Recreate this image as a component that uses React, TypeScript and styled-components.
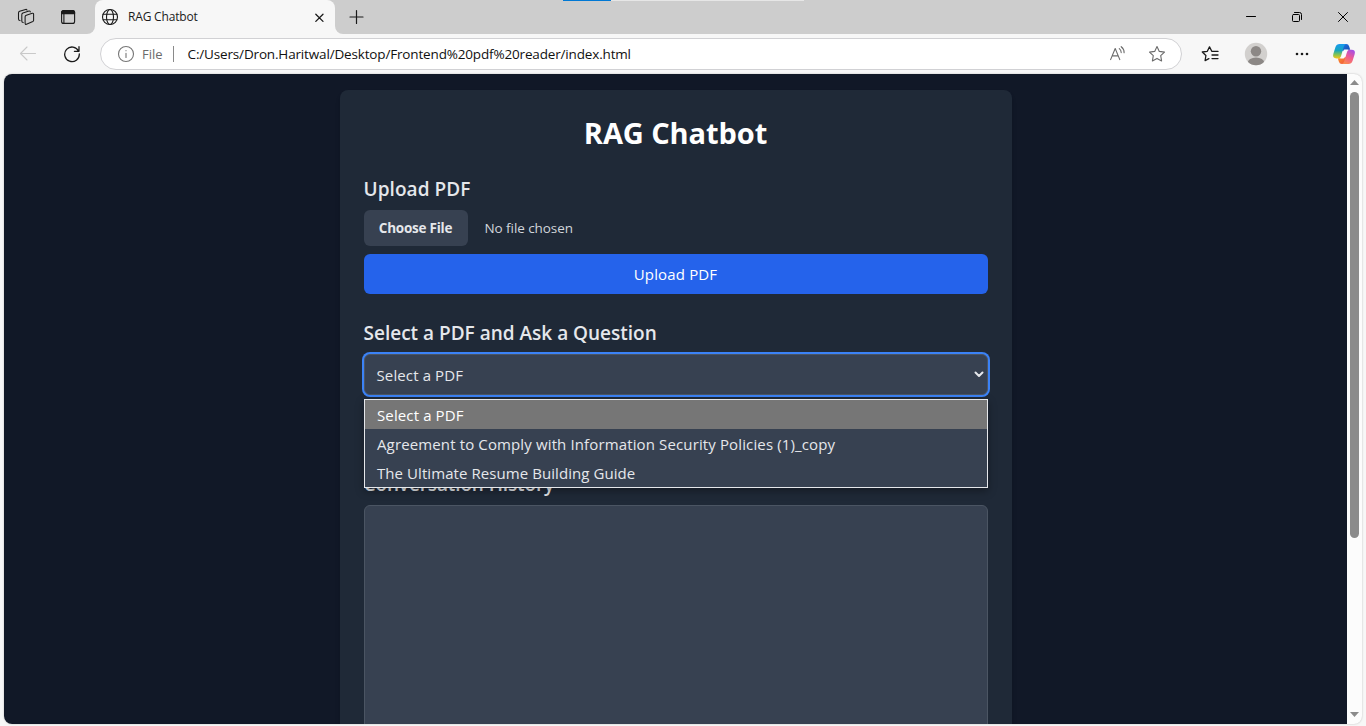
import React, { useState } from "react";
import styled, { createGlobalStyle } from "styled-components";

const GlobalStyle = createGlobalStyle`
  *, *::before, *::after { box-sizing: border-box; }
  body { margin: 0; overflow: hidden; font-family: "Segoe UI", "Open Sans", "Noto Sans", sans-serif; }
  button { font-family: inherit; border: 0; padding: 0; background: none; }
  h1, h2, ul { margin: 0; padding: 0; }
`;

const Window = styled.div`
  display: flex;
  flex-direction: column;
  width: 1366px;
  height: 726px;
  overflow: hidden;
  background: #f7f7f7;
`;

const TabStrip = styled.div`
  position: relative;
  display: flex;
  height: 34px;
  flex: none;
`;

const StripStart = styled.div`
  display: flex;
  align-items: center;
  width: 95px;
  padding-left: 17px;
  gap: 24px;
  background: #cdcdcd;
  border-bottom-right-radius: 8px;
`;

const TabSlot = styled.div`
  width: 240px;
  background: #cdcdcd;
`;

const Tab = styled.div`
  display: flex;
  align-items: center;
  height: 34px;
  padding: 0 10px 0 6px;
  background: #f7f7f7;
  border-radius: 8px 8px 0 0;
`;

const TabTitle = styled.span`
  flex: 1;
  margin-left: 9px;
  font-size: 12px;
  letter-spacing: -0.18px;
  line-height: 16px;
  color: #1b1b1b;
`;

const StripEnd = styled.div`
  display: flex;
  flex: 1;
  align-items: center;
  justify-content: space-between;
  padding: 0 15px 0 13px;
  background: #cdcdcd;
  border-bottom-left-radius: 8px;
`;

const WindowControls = styled.div`
  display: flex;
  gap: 30px;
`;

const LoadingBar = styled.div`
  position: absolute;
  top: 0;
  left: 563px;
  width: 241px;
  height: 1px;
  background: linear-gradient(to right, #0078d4 48px, #e6e6e6 48px);
`;

const Toolbar = styled.div`
  display: flex;
  align-items: center;
  height: 40px;
  flex: none;
  padding-left: 18px;
`;

const IconButton = styled.button<{ $gap?: number }>`
  display: flex;
  align-items: center;
  justify-content: center;
  flex: none;
  width: 20px;
  height: 20px;
  margin-left: ${(p) => p.$gap ?? 0}px;
  svg { flex: none; }
`;

const AddressBar = styled.div`
  display: flex;
  align-items: center;
  width: 1082px;
  height: 32px;
  margin-left: 18px;
  padding: 0 14px 0 16px;
  background: #fff;
  border: 1px solid #d1d1d4;
  border-radius: 16px;
`;

const Scheme = styled.span`
  margin-left: 7px;
  padding-right: 10px;
  border-right: 1px solid #8a8a8a;
  font-size: 13px;
  line-height: 16px;
  color: #6b6b6b;
`;

const Url = styled.span`
  flex: 1;
  margin-left: 14px;
  font-size: 13.5px;
  letter-spacing: -0.16px;
  color: #111;
`;

const Viewport = styled.div`
  display: flex;
  width: 1358px;
  height: 650px;
  margin-left: 4px;
  overflow: hidden;
  border-radius: 8px;
  background: #fcfcfc;
  box-shadow: 0 0 2px rgba(0, 0, 0, 0.25);
`;

const Page = styled.main`
  display: flex;
  align-items: flex-start;
  justify-content: center;
  width: 1343px;
  height: 650px;
  padding-top: 16px;
  overflow: hidden;
  background: #111827;
`;

const Card = styled.div`
  width: 672px;
  height: 1000px;
  padding: 24px;
  border-radius: 8px;
  background: #1f2937;
  color: #e5e7eb;
  box-shadow: 0 4px 6px -1px rgba(0, 0, 0, 0.1), 0 2px 4px -2px rgba(0, 0, 0, 0.1);
`;

const Title = styled.h1`
  margin-bottom: 24px;
  font-size: 29px;
  font-weight: 700;
  line-height: 38px;
  height: 36px;
  letter-spacing: -0.08px;
  text-align: center;
  color: #fff;
`;

const Section = styled.section<{ $height: number }>`
  position: relative;
  height: ${(p) => p.$height}px;
`;

const Heading = styled.h2<{ $tracking?: number }>`
  height: 28px;
  margin-bottom: 8px;
  font-size: 19px;
  font-weight: 600;
  line-height: 31px;
  letter-spacing: ${(p) => p.$tracking ?? 0}px;
  white-space: nowrap;
`;

const FileRow = styled.div`
  display: flex;
  align-items: center;
  height: 36px;
  margin-bottom: 8px;
  gap: 17px;
  font-size: 13.5px;
  color: #d1d5db;
  letter-spacing: -0.07px;
`;

const ChooseButton = styled.button`
  width: 104px;
  height: 36px;
  border-radius: 6px;
  background: #374151;
  color: #e5e7eb;
  font-size: 13.5px;
  font-weight: 700;
  letter-spacing: -0.24px;
`;

const UploadButton = styled.button`
  width: 100%;
  height: 40px;
  border-radius: 6px;
  background: #2563eb;
  color: #fff;
  font-size: 15px;
  line-height: 24px;
  letter-spacing: 0.15px;
`;

const SelectBox = styled.div`
  display: flex;
  align-items: center;
  justify-content: space-between;
  height: 41px;
  padding: 0 3px 0 12px;
  border: 1px solid #4b5563;
  border-radius: 6px;
  background: #374151;
  font-size: 15px;
  letter-spacing: 0.12px;
  box-shadow: 0 0 0 2px #3b82f6;
`;

const Menu = styled.ul`
  position: absolute;
  top: 81px;
  left: 0;
  z-index: 2;
  width: 624px;
  list-style: none;
  border: 1px solid #e5e7eb;
  background: #374151;
  box-shadow: 0 3px 8px rgba(0, 0, 0, 0.35);
`;

const Option = styled.li<{ $active: boolean; $tracking: number }>`
  height: 29px;
  padding-left: 12.5px;
  font-size: 15px;
  line-height: 30px;
  letter-spacing: ${(p) => p.$tracking}px;
  white-space: nowrap;
  color: ${(p) => (p.$active ? "#fff" : "#e5e7eb")};
  background: ${(p) => (p.$active ? "#767676" : "transparent")};
`;

const History = styled.div`
  height: 384px;
  border: 1px solid #4b5563;
  border-radius: 6px;
  background: #374151;
`;

const Scrollbar = styled.div`
  display: flex;
  flex-direction: column;
  align-items: center;
  justify-content: space-between;
  width: 15px;
  height: 650px;
  padding: 6px 0 7px;
`;

const Thumb = styled.div`
  width: 9px;
  height: 446px;
  margin: 7px 0 auto;
  border-radius: 5px;
  background: #8b8b8b;
`;

const Arrow = styled.div<{ $down?: boolean }>`
  width: 9px;
  height: 5px;
  background: #8b8b8b;
  clip-path: ${(p) => (p.$down ? "polygon(0 0, 100% 0, 50% 100%)" : "polygon(50% 0, 100% 100%, 0 100%)")};
`;

type IconProps = { size?: number; stroke?: string; width?: number; children: React.ReactNode };

const Icon = ({ size = 18, stroke = "#1a1a1a", width = 1.1, children }: IconProps) => (
  <svg width={size} height={size} viewBox={`0 0 ${size} ${size}`} fill="none" stroke={stroke}
    strokeWidth={width} strokeLinecap="round" strokeLinejoin="round">
    {children}
  </svg>
);

const WorkspacesIcon = () => (
  <Icon width={1.05}>
    <path d="M9.3 7.2 15.3 5.3Q16.6 5 16.6 6.3V12.2Q16.6 13.1 15.8 13.5L9.5 16.3Q8.1 16.7 8.1 15.3V8.8Q8.1 7.6 9.3 7.2Z" />
    <path d="M6.2 14.6Q4.8 14.4 4.8 13V6.7Q4.8 5.5 5.9 5L12 3Q13.2 2.7 13.3 3.9" />
    <path d="M3 12.6Q1.5 12.4 1.5 11V5Q1.5 3.8 2.6 3.3L8.6 1.4Q9.8 1.1 10 2.2" />
  </Icon>
);

const TabActionsIcon = () => (
  <Icon>
    <path d="M4.6 2.6h9a2 2 0 0 1 2 2v8.8a2 2 0 0 1-2 2h-9a2 2 0 0 1-2-2V4.6a2 2 0 0 1 2-2Z" />
    <path d="M2.6 5.6v-1a2 2 0 0 1 2-2h9a2 2 0 0 1 2 2v1Z" fill="#1a1a1a" />
    <path d="M4.9 6v9" />
  </Icon>
);

const GlobeIcon = () => (
  <Icon>
    <circle cx="9" cy="9" r="7.5" />
    <ellipse cx="9" cy="9" rx="3.5" ry="7.5" />
    <path d="M2.2 6.3h13.6M2.2 11.7h13.6" />
  </Icon>
);

const CopilotIcon = () => (
  <svg width="24" height="24" viewBox="0 0 24 24">
    <defs>
      <linearGradient id="cpLeft" x1="0" y1="0" x2="0" y2="1">
        <stop offset="0" stopColor="#199af0" />
        <stop offset=".45" stopColor="#17a6bd" />
        <stop offset=".72" stopColor="#7dc257" />
        <stop offset="1" stopColor="#f5c617" />
      </linearGradient>
      <linearGradient id="cpRight" x1=".8" y1="0" x2=".3" y2="1">
        <stop offset="0" stopColor="#a34ee8" />
        <stop offset=".5" stopColor="#ee5a92" />
        <stop offset="1" stopColor="#fb8b50" />
      </linearGradient>
      <linearGradient id="cpTop" x1="0" y1="0" x2="1" y2="1">
        <stop offset="0" stopColor="#2177e5" />
        <stop offset="1" stopColor="#164aaf" />
      </linearGradient>
      <linearGradient id="cpBottom" x1="0" y1="0" x2="1" y2="1">
        <stop offset="0" stopColor="#fb9c22" />
        <stop offset="1" stopColor="#ef4b46" />
      </linearGradient>
    </defs>
    <path d="M9 2h5.2q2.3 0 2.9 2.2l1.1 3.6h-2.8q-2 0-2.7 2L9 8Z" fill="url(#cpTop)" />
    <path d="M15 22H9.8q-2.2 0-2.9-2.2l-1.1-3.5h3q1.9 0 2.6-2L15 16Z" fill="url(#cpBottom)" />
    <path d="M7.6 2H14q-1.5.5-2.2 2.7L8.9 14.4q-.6 2-2.7 2H4.5Q.2 16.4 1.3 12L3.4 5.3Q4.5 2 7.6 2Z" fill="url(#cpLeft)" />
    <path d="M16.4 22H10q1.5-.5 2.2-2.7l2.9-9.5q.6-2 2.7-2h1.7q4.3 0 3.2 4.2l-2.1 6.7Q19.5 22 16.4 22Z" fill="url(#cpRight)" />
    <path d="M12.6 7.6H16Q15 8 14.6 9.4L12.8 15.2Q12.3 16.5 11.2 16.5H8.2Q9.2 16 9.6 14.8L11.3 9Q11.7 7.6 12.6 7.6Z" fill="#fbfbfb" />
  </svg>
);

const options = [
  { label: "Select a PDF", tracking: 0.12 },
  { label: "Agreement to Comply with Information Security Policies (1)_copy", tracking: 0.13 },
  { label: "The Ultimate Resume Building Guide", tracking: 0.07 },
];

export default function App() {
  const [selected, setSelected] = useState(0);
  return (
    <Window>
      <GlobalStyle />
      <TabStrip>
        <StripStart>
          <WorkspacesIcon />
          <TabActionsIcon />
        </StripStart>
        <TabSlot>
          <Tab>
            <GlobeIcon />
            <TabTitle>RAG Chatbot</TabTitle>
            <Icon size={11} width={1.3}><path d="M1.8 2.2l7.2 7.2M9 2.2 1.8 9.4" /></Icon>
          </Tab>
        </TabSlot>
        <StripEnd>
          <Icon size={16} width={1.2}><path d="M8.5 1.5v13M2 8h13" /></Icon>
          <WindowControls>
            <Icon size={16} stroke="#000" width={1}><path d="M3.5 7.5h9" /></Icon>
            <Icon size={16} stroke="#000" width={1}>
              <rect x="3.5" y="5.5" width="7" height="7" rx="1" />
              <path d="M5.5 3.5h5a2 2 0 0 1 2 2v5" />
            </Icon>
            <Icon size={16} stroke="#000" width={1}><path d="M3.5 3.5l9 9M12.5 3.5l-9 9" /></Icon>
          </WindowControls>
        </StripEnd>
        <LoadingBar />
      </TabStrip>

      <Toolbar>
        <IconButton aria-label="Back">
          <Icon stroke="#c9c9c9"><path d="M16.5 8.5h-15M8 2 1.5 8.5 8 15" /></Icon>
        </IconButton>
        <IconButton aria-label="Refresh" $gap={24}>
          <Icon width={1.3}><path d="M15.6 6.2A7.3 7.3 0 1 0 16.3 9M16 1.7v4.6h-4.6" /></Icon>
        </IconButton>
        <AddressBar>
          <Icon stroke="#767676"><circle cx="9" cy="9" r="7.5" /><path d="M9 8.2v4.3M9 5.5v.3" /></Icon>
          <Scheme>File</Scheme>
          <Url>C:/Users/Dron.Haritwal/Desktop/Frontend%20pdf%20reader/index.html</Url>
          <IconButton aria-label="Read aloud">
            <Icon stroke="#6b6b6b">
              <path d="M1.6 14.6 6.2 3.5l4.6 11.1M3.2 10.9h6M10.3 3.6q1.9 1.5 1.9 4M12.2 1.7q3.1 2.4 2.9 6" />
            </Icon>
          </IconButton>
          <IconButton aria-label="Favorite" $gap={19}>
            <Icon stroke="#6b6b6b">
              <path d="M9 1.6l2.3 4.8 5.2.7-3.8 3.6.9 5.2L9 13.4l-4.6 2.5.9-5.2L1.5 7.1l5.2-.7Z" />
            </Icon>
          </IconButton>
        </AddressBar>
        <IconButton aria-label="Favorites" $gap={18}>
          <Icon width={1.3}>
            <path d="M10.8 6.3 8.5 1.9 6.3 6.3l-5 .7 3.6 3.5-.8 5.1 3.8-2M11 6.4h6M11 10h6M11 13.6h6" />
          </Icon>
        </IconButton>
        <IconButton aria-label="Profile" $gap={26}>
          <svg width="24" height="24" viewBox="0 0 24 24">
            <defs><clipPath id="avatar"><circle cx="12" cy="12" r="11.2" /></clipPath></defs>
            <g clipPath="url(#avatar)">
              <rect width="24" height="24" fill="#d2d0ce" />
              <circle cx="12" cy="9.2" r="5.2" fill="#8c8886" />
              <ellipse cx="12" cy="20.6" rx="8.3" ry="5.2" fill="#8c8886" />
            </g>
          </svg>
        </IconButton>
        <IconButton aria-label="More" $gap={26}>
          <svg width="18" height="18" viewBox="0 0 18 18" fill="#1a1a1a">
            <circle cx="4" cy="9" r="1.3" /><circle cx="9" cy="9" r="1.3" /><circle cx="14" cy="9" r="1.3" />
          </svg>
        </IconButton>
        <IconButton aria-label="Copilot" $gap={22}><CopilotIcon /></IconButton>
      </Toolbar>

      <Viewport>
        <Page>
          <Card>
            <Title>RAG Chatbot</Title>
            <Section $height={144}>
              <Heading $tracking={0.06}>Upload PDF</Heading>
              <FileRow>
                <ChooseButton>Choose File</ChooseButton>
                <span>No file chosen</span>
              </FileRow>
              <UploadButton>Upload PDF</UploadButton>
            </Section>
            <Section $height={151}>
              <Heading>Select a PDF and Ask a Question</Heading>
              <SelectBox>
                <span>{options[selected].label}</span>
                <Icon size={10} stroke="#e5e7eb" width={2}><path d="M1.5 2.5 5 6 8.5 2.5" /></Icon>
              </SelectBox>
              <Menu>
                {options.map((o, i) => (
                  <Option key={o.label} $active={i === selected} $tracking={o.tracking} onClick={() => setSelected(i)}>
                    {o.label}
                  </Option>
                ))}
              </Menu>
            </Section>
            <Section $height={420}>
              <Heading $tracking={-0.12}>Conversation History</Heading>
              <History />
            </Section>
          </Card>
        </Page>
        <Scrollbar>
          <Arrow />
          <Thumb />
          <Arrow $down />
        </Scrollbar>
      </Viewport>
    </Window>
  );
}
